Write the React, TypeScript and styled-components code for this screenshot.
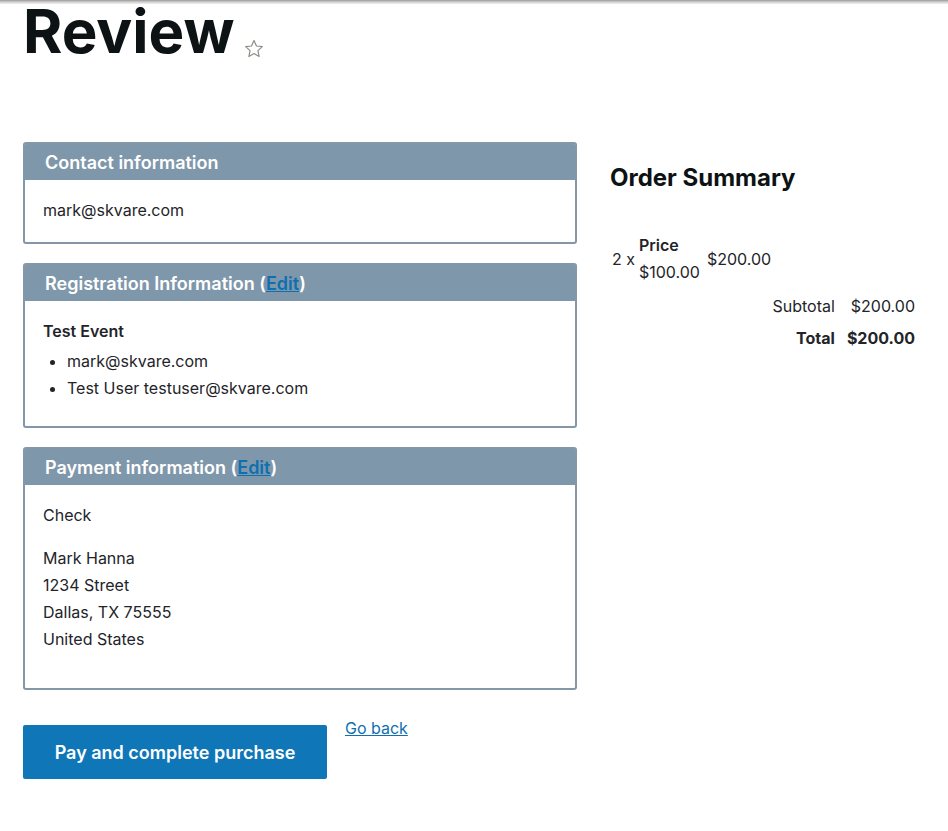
import styled, { createGlobalStyle } from "styled-components";

const GlobalStyle = createGlobalStyle`
  body {
    margin: 0;
    background: #fff;
    color: #232429;
    font-family: Inter, "Liberation Sans", sans-serif;
  }
  * { box-sizing: border-box; }
`;

const App = () => {
  return (
    <>
      <GlobalStyle />
      <TopStrip />
      <Page>
        <TitleRow>
          <Title>Review</Title>
          <Star viewBox="0 0 24 24" aria-hidden="true">
            <path d="M12 2.8l2.7 5.9 6.4.7-4.8 4.4 1.3 6.4L12 17l-5.6 3.2 1.3-6.4-4.8-4.4 6.4-.7z" />
          </Star>
        </TitleRow>
        <Columns>
          <div>
            <Card>
              <CardHeader>Contact information</CardHeader>
              <CardBody $bottom={20}>mark@skvare.com</CardBody>
            </Card>
            <Card>
              <CardHeader>
                Registration Information (<EditLink href="#">Edit</EditLink>)
              </CardHeader>
              <CardBody $bottom={24}>
                <EventName>Test Event</EventName>
                <List>
                  <li>mark@skvare.com</li>
                  <li>Test User testuser@skvare.com</li>
                </List>
              </CardBody>
            </Card>
            <Card>
              <CardHeader>
                Payment information (<EditLink href="#">Edit</EditLink>)
              </CardHeader>
              <CardBody $bottom={35}>
                <div>Check</div>
                <Address>
                  <div>Mark Hanna</div>
                  <div>1234 Street</div>
                  <div>Dallas, TX 75555</div>
                  <div>United States</div>
                </Address>
              </CardBody>
            </Card>
            <Actions>
              <PayButton type="button">Pay and complete purchase</PayButton>
              <BackLink href="#">Go back</BackLink>
            </Actions>
          </div>
          <Summary>
            <SummaryTitle>Order Summary</SummaryTitle>
            <ItemTable>
              <tbody>
                <tr>
                  <td>2 x</td>
                  <td>
                    <PriceLabel>Price</PriceLabel>
                    <div>$100.00</div>
                  </td>
                  <td>$200.00</td>
                </tr>
              </tbody>
            </ItemTable>
            <Totals>
              <TotalLabel>Subtotal</TotalLabel>
              <TotalValue>$200.00</TotalValue>
              <TotalLabel $bold>Total</TotalLabel>
              <TotalValue $bold>$200.00</TotalValue>
            </Totals>
          </Summary>
        </Columns>
      </Page>
    </>
  );
};
export default App;

const TopStrip = styled.div`
  height: 4px;
  background: linear-gradient(#9a9a9a, #cfcfcf 50%, #f2f2f2);
`;

const Page = styled.div`
  padding: 0 23px 40px;
`;

const TitleRow = styled.div`
  display: flex;
  align-items: flex-end;
  gap: 8px;
`;

const Title = styled.h1`
  margin: 0;
  font-size: 60px;
  line-height: 54px;
  font-weight: 700;
  color: #0d1214;
`;

const Star = styled.svg`
  width: 22px;
  height: 22px;
  margin-bottom: -2px;
  fill: none;
  stroke: #8e8e86;
  stroke-width: 1.3;
  stroke-linejoin: round;
`;

const Columns = styled.div`
  display: grid;
  grid-template-columns: 554px 1fr;
  gap: 33px;
  margin-top: 84px;
`;

const Card = styled.section`
  border: 2px solid #8397a9;
  border-radius: 3px;
  margin-bottom: 19px;
  overflow: hidden;
`;

const CardHeader = styled.div`
  height: 36px;
  display: flex;
  align-items: center;
  padding: 0 20px;
  background: #7f97aa;
  color: #fff;
  font-size: 18px;
  font-weight: 600;
  white-space: pre;
`;

const EditLink = styled.a`
  color: #0f6fb0;
  text-decoration: underline;
`;

const CardBody = styled.div<{ $bottom: number }>`
  padding: 18px 18px ${(p) => p.$bottom}px;
  font-size: 16px;
  line-height: 24px;
`;

const EventName = styled.div`
  font-weight: 600;
`;

const List = styled.ul`
  margin: 5px 0 0;
  padding-left: 24px;
  line-height: 27px;
`;

const Address = styled.div`
  margin-top: 18px;
  line-height: 27px;
`;

const Actions = styled.div`
  display: flex;
  align-items: flex-start;
  gap: 18px;
  margin-top: 35px;
`;

const PayButton = styled.button`
  height: 54px;
  width: 304px;
  border: 0;
  border-radius: 2px;
  background: #0f76b8;
  color: #fff;
  font-family: inherit;
  font-size: 18px;
  font-weight: 600;
  cursor: pointer;
`;

const BackLink = styled.a`
  color: #0f6fb0;
  font-size: 16px;
  line-height: 6px;
  text-decoration: underline;
`;

const Summary = styled.aside`
  padding-top: 20px;
`;

const SummaryTitle = styled.h2`
  margin: 0;
  font-size: 24px;
  line-height: 32px;
  font-weight: 700;
  color: #0d1214;
`;

const ItemTable = styled.table`
  margin-top: 38px;
  border-collapse: collapse;
  font-size: 16px;
  td {
    padding: 0 2px;
    vertical-align: middle;
    line-height: 27px;
  }
  td + td + td {
    padding-left: 5px;
  }
`;

const PriceLabel = styled.div`
  font-weight: 600;
`;

const Totals = styled.div`
  width: 305px;
  margin-top: 4px;
  display: grid;
  grid-template-columns: auto auto;
  justify-content: end;
  column-gap: 12px;
  font-size: 16px;
  line-height: 32px;
  text-align: right;
`;

const TotalLabel = styled.div<{ $bold?: boolean }>`
  font-weight: ${(p) => (p.$bold ? 700 : 400)};
`;

const TotalValue = styled.div<{ $bold?: boolean }>`
  font-weight: ${(p) => (p.$bold ? 700 : 400)};
`;
